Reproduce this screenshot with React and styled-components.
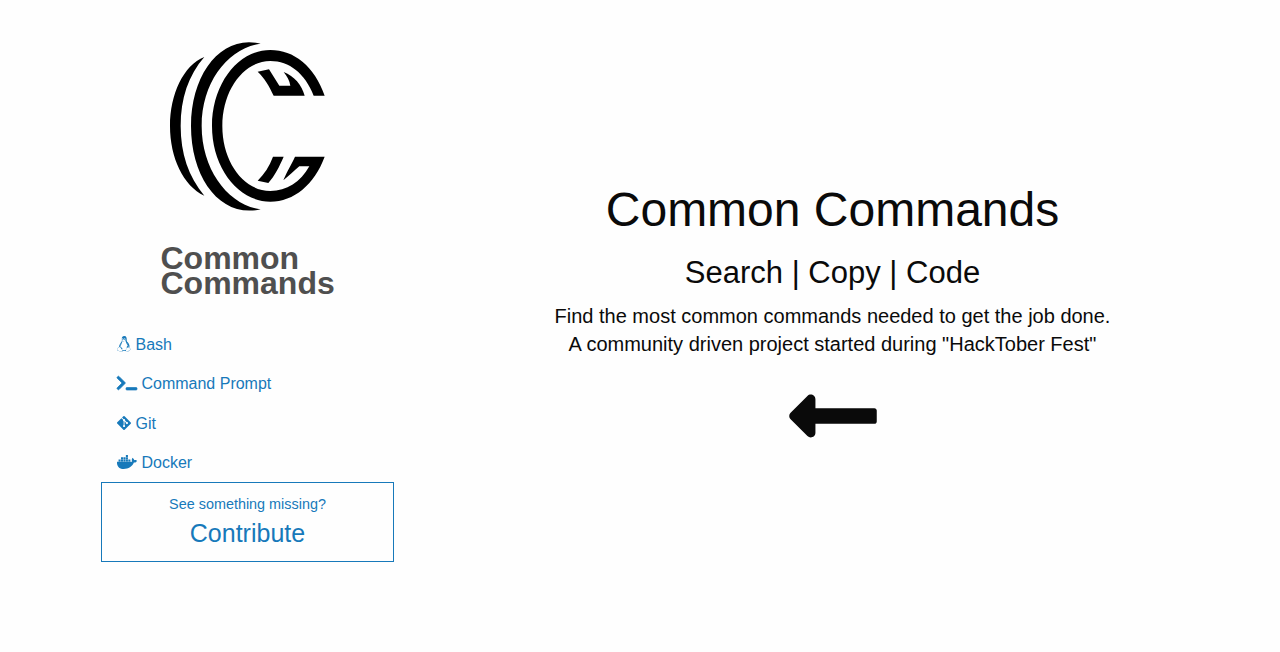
import React from "react";
import styled, { createGlobalStyle } from "styled-components";
import { FaLinux, FaTerminal, FaGitAlt, FaDocker, FaLongArrowAltLeft } from "react-icons/fa";

const GlobalStyle = createGlobalStyle`
  *, *::before, *::after { box-sizing: border-box; }
  body {
    margin: 0;
    background: #fefefe;
    color: #0a0a0a;
    font-family: "Liberation Sans", Arial, sans-serif;
    font-size: 16px;
    line-height: 1.5;
  }
`;

const Page = styled.div`
  display: flex;
  min-height: 652px;
  padding-left: 101px;
`;

const Sidebar = styled.aside`
  width: 293px;
  display: flex;
  flex-direction: column;
  padding-top: 30px;
`;

const Logo = styled.svg`
  display: block;
  width: 200px;
  height: 190px;
  margin-left: 49px;
`;

const Brand = styled.h2`
  margin: 26px 0 0 59.5px;
  color: #4f4f4f;
  font-size: 32px;
  font-weight: bold;
  line-height: 25px;
`;

const Menu = styled.nav`
  display: flex;
  flex-direction: column;
  margin-top: 28px;
`;

const MenuLink = styled.a`
  display: block;
  height: 39.4px;
  padding: 11.8px 16px 0;
  color: #1779ba;
  line-height: 16px;
  white-space: pre;
  cursor: pointer;

  svg {
    width: ${({ $wide }) => ($wide ? "20px" : "14px")};
    height: 16px;
    vertical-align: -2px;
  }
`;

const PromptIcon = styled(FaTerminal)`
  overflow: visible;
  stroke: currentColor;
  stroke-width: 22px;
`;

const Contribute = styled.a`
  display: flex;
  flex-direction: column;
  align-items: center;
  height: 80px;
  padding-top: 13px;
  border: 1px solid #1779ba;
  color: #1779ba;
  cursor: pointer;
`;

const Hint = styled.span`
  font-size: 14.4px;
  line-height: 17px;
`;

const Action = styled.span`
  margin-top: 5px;
  font-size: 25px;
  line-height: 30px;
`;

const Main = styled.main`
  width: 586px;
  margin-left: 145.5px;
  padding-top: 176px;
  text-align: center;
`;

const Title = styled.h1`
  margin: 0;
  font-size: 48px;
  font-weight: normal;
  line-height: 67px;
`;

const Subtitle = styled.h3`
  margin: 8px 0 0;
  font-size: 31px;
  font-weight: normal;
  line-height: 43px;
`;

const Lead = styled.p`
  margin: 8px 0 0;
  font-size: 20px;
  line-height: 28px;
`;

const Arrow = styled(FaLongArrowAltLeft)`
  display: block;
  width: 88px;
  height: 100px;
  margin: 7.5px auto 0;
`;

const items = [
  { label: "Bash", Icon: FaLinux },
  { label: "Command Prompt", Icon: PromptIcon, wide: true },
  { label: "Git", Icon: FaGitAlt },
  { label: "Docker", Icon: FaDocker, wide: true },
];

export default function App() {
  return (
    <>
      <GlobalStyle />
      <Page>
        <Sidebar>
          <Logo viewBox="0 0 600 570" fill="#000" aria-hidden="true">
            <path d="M163 81C100 106 60 193 60 288C60 383 100 468 163 497C115 440 92 370 92 288C92 206 115 136 163 81Z" />
            <path d="M332 41C215 12 123 130 123 288C123 446 212 565 332 538C235 525 155 420 155 288C155 155 235 55 332 41Z" />
            <path d="M524 197C493 108 432 60 361 60C264 60 186 162 186 288C186 413 264 515 361 515C432 515 493 463 524 380H435C424 404 412 422 400 451C415 439 432 423 448 409H478C452 456 410 483 361 483C281 483 217 396 217 288C217 180 281 93 361 93C418 93 465 130 491 197Z" />
            <path d="M323 125L357 118L388 167H421C419 151 411 139 401 126C433 138 455 165 464 197H371C358 170 344 144 323 125Z" />
            <path d="M369 380H401C388 410 374 438 355 459L323 452C343 432 358 409 369 380Z" />
          </Logo>
          <Brand>Common<br />Commands</Brand>
          <Menu>
            {items.map(({ label, Icon, wide }) => (
              <MenuLink key={label} $wide={wide}>
                <Icon /> {label}
              </MenuLink>
            ))}
          </Menu>
          <Contribute>
            <Hint>See something missing?</Hint>
            <Action>Contribute</Action>
          </Contribute>
        </Sidebar>
        <Main>
          <Title>Common Commands</Title>
          <Subtitle>Search | Copy | Code</Subtitle>
          <Lead>
            Find the most common commands needed to get the job done.
            <br />A community driven project started during "HackTober Fest"
          </Lead>
          <Arrow />
        </Main>
      </Page>
    </>
  );
}
